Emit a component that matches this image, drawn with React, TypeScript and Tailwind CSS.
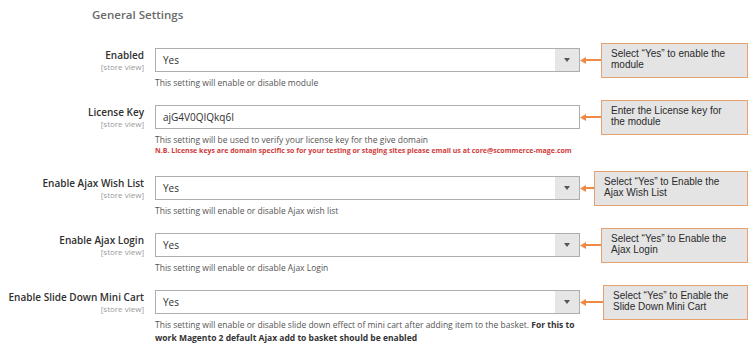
type Row = {
  label: string
  value: string
  select: boolean
  help: React.ReactNode
  note?: string
  tip: string[]
  tipW: string
}

const rows: Row[] = [
  {
    label: "Enabled",
    value: "Yes",
    select: true,
    help: "This setting will enable or disable module",
    tip: ["Select \u201cYes\u201d to enable the", "module"],
    tipW: "w-[147px]",
  },
  {
    label: "License Key",
    value: "ajG4V0QIQkq6I",
    select: false,
    help: "This setting will be used to verify your license key for the give domain",
    note: "N.B. License keys are domain specific so for your testing or staging sites please email us at core@scommerce-mage.com",
    tip: ["Enter the License key for", "the module"],
    tipW: "w-[147px]",
  },
  {
    label: "Enable Ajax Wish List",
    value: "Yes",
    select: true,
    help: "This setting will enable or disable Ajax wish list",
    tip: ["Select \u201cYes\u201d to Enable the", "Ajax Wish List"],
    tipW: "w-[154px]",
  },
  {
    label: "Enable Ajax Login",
    value: "Yes",
    select: true,
    help: "This setting will enable or disable Ajax Login",
    tip: ["Select \u201cYes\u201d to Enable the", "Ajax Login"],
    tipW: "w-[147px]",
  },
  {
    label: "Enable Slide Down Mini Cart",
    value: "Yes",
    select: true,
    help: (
      <>
        This setting will enable or disable slide down effect of mini cart after adding item to the basket.{" "}
        <b className="font-bold text-[#333]">For this to work Magento 2 default Ajax add to basket should be enabled</b>
      </>
    ),
    tip: ["Select \u201cYes\u201d to Enable the", "Slide Down Mini Cart"],
    tipW: "w-[145px]",
  },
]

function Arrow() {
  return (
    <div className="flex flex-1 items-center">
      <svg width="6" height="7" viewBox="0 0 6 7" className="shrink-0">
        <path d="M0 3.5 L6 0 L6 7 Z" fill="#ee8a45" />
      </svg>
      <div className="h-[2px] flex-1 bg-[#ee8a45]" />
    </div>
  )
}

function SettingRow({ row }: { row: Row }) {
  return (
    <div className={`flex flex-col ${row.note ? "mb-[4px]" : ""}`}>
      <div className="flex h-[24px] items-center">
        <div className="w-[144px] shrink-0 self-start text-right">
          <div className="text-[10px] leading-[14px] font-semibold text-[#303030]">{row.label}</div>
          <div className="text-[8px] leading-[9px] text-[#9a9a9a]">[store view]</div>
        </div>
        <div className="ml-[11px] flex h-[24px] w-[425px] shrink-0 border border-[#adadad] bg-white">
          <div className="flex flex-1 items-center pl-[7px] text-[10px] text-[#303030]">{row.value}</div>
          {row.select && (
            <div className="flex w-[24px] items-center justify-center bg-[#e6e6e6]">
              <svg width="6" height="4" viewBox="0 0 6 4">
                <path d="M0 0 L6 0 L3 4 Z" fill="#555" />
              </svg>
            </div>
          )}
        </div>
        <Arrow />
        <div
          className={`${row.tipW} mr-[2px] h-[35px] shrink-0 border border-[#e8a070] bg-[#e4e4e4] pt-[4px] pl-[9px] font-['Liberation_Sans',Arial,sans-serif] text-[10px] leading-[11px] text-[#2a2a2a]`}
        >
          {row.tip.map((t) => (
            <div key={t}>{t}</div>
          ))}
        </div>
      </div>
      <div className="mt-[4px] ml-[155px] w-[428px] text-[8.5px] leading-[13px] text-[#555]">{row.help}</div>
      {row.note && (
        <div className="pl-[155px] text-[7px] leading-[10px] font-bold whitespace-nowrap text-[#d23a3a]">{row.note}</div>
      )}
    </div>
  )
}

export default function App() {
  return (
    <div className="h-[345px] w-[750px] overflow-hidden bg-white font-['Open_Sans',sans-serif]">
      <h2 className="pt-[7px] pl-[92px] text-[11.5px] leading-[16px] font-semibold text-[#6a6a6a]">General Settings</h2>
      <div className="mt-[25px] flex flex-col gap-[16px]">
        {rows.map((r) => (
          <SettingRow key={r.label} row={r} />
        ))}
      </div>
    </div>
  )
}
